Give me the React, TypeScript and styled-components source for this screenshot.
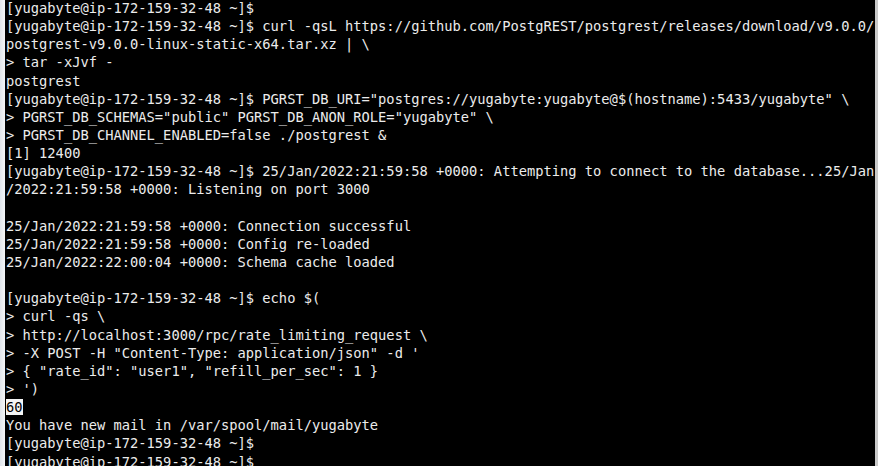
import React from "react";
import styled, { createGlobalStyle } from "styled-components";

const Global = createGlobalStyle`
  html, body { margin: 0; padding: 0; background: #000; overflow: hidden; }
  #root { width: 878px; height: 466px; }
`;

const Window = styled.div`
  display: flex;
  width: 878px;
  height: 466px;
  overflow: hidden;
  background: #000;
`;

const LeftEdge = styled.div`
  width: 5px;
  flex: none;
  background: linear-gradient(to right, #dfe4ea, #f4f6f8);
`;

const RightEdge = styled.div`
  width: 3px;
  flex: none;
  background: #c9c9c9;
`;

const Screen = styled.div`
  flex: 1;
  min-width: 0;
  overflow: hidden;
  padding-left: 1px;
`;

const Lines = styled.div`
  margin-top: -1px;
  font-family: "DejaVu Sans Mono", "Liberation Mono", monospace;
  font-size: 13.74px;
  line-height: 18.15px;
  color: #ececec;
  white-space: pre;
`;

const Line = styled.div`
  height: 18.15px;
`;

const Highlight = styled.span`
  background: #f4f4f4;
  color: #000;
`;

const P = "[yugabyte@ip-172-159-32-48 ~]$";

const lines: string[] = [
  `${P}`,
  `${P} curl -qsL https://github.com/PostgREST/postgrest/releases/download/v9.0.0/`,
  `postgrest-v9.0.0-linux-static-x64.tar.xz | \\`,
  `> tar -xJvf -`,
  `postgrest`,
  `${P} PGRST_DB_URI="postgres://yugabyte:yugabyte@$(hostname):5433/yugabyte" \\`,
  `> PGRST_DB_SCHEMAS="public" PGRST_DB_ANON_ROLE="yugabyte" \\`,
  `> PGRST_DB_CHANNEL_ENABLED=false ./postgrest &`,
  `[1] 12400`,
  `${P} 25/Jan/2022:21:59:58 +0000: Attempting to connect to the database...25/Jan`,
  `/2022:21:59:58 +0000: Listening on port 3000`,
  ``,
  `25/Jan/2022:21:59:58 +0000: Connection successful`,
  `25/Jan/2022:21:59:58 +0000: Config re-loaded`,
  `25/Jan/2022:22:00:04 +0000: Schema cache loaded`,
  ``,
  `${P} echo $(`,
  `> curl -qs \\`,
  `> http://localhost:3000/rpc/rate_limiting_request \\`,
  `> -X POST -H "Content-Type: application/json" -d '`,
  `> { "rate_id": "user1", "refill_per_sec": 1 }`,
  `> ')`,
  `__HL__60`,
  `You have new mail in /var/spool/mail/yugabyte`,
  `${P}`,
  `${P}`,
];

export default function App() {
  return (
    <>
      <Global />
      <Window>
        <LeftEdge />
        <Screen>
          <Lines>
            {lines.map((l, i) => (
              <Line key={i}>
                {l.startsWith("__HL__") ? <Highlight>{l.slice(6)}</Highlight> : l}
              </Line>
            ))}
          </Lines>
        </Screen>
        <RightEdge />
      </Window>
    </>
  );
}
